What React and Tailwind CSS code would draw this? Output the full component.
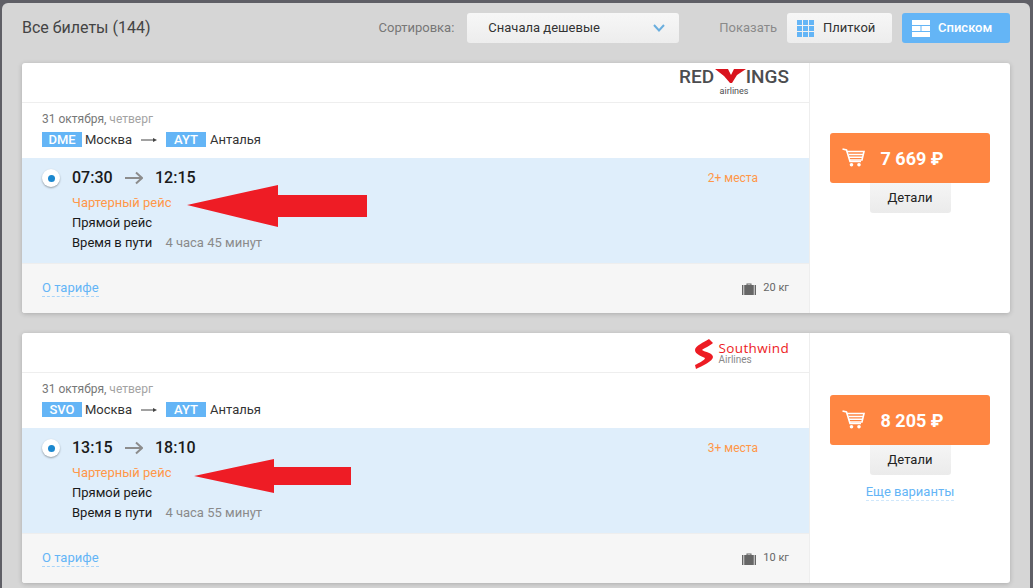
const Cart = () => (
  <svg width="23" height="19" viewBox="0 0 23 19" fill="none" className="absolute left-[12px] top-[15px]">
    <path d="M0.5 1 L4.5 2 L8 13.5 H19" stroke="white" strokeWidth="1.6" />
    <path d="M5 3.5 H22 L20 12 H7.5" stroke="white" strokeWidth="1.6" />
    <path d="M6.5 6.5 H21 M7 9.3 H20.5" stroke="white" strokeWidth="1.4" />
    <circle cx="9.5" cy="16.8" r="1.8" fill="white" />
    <circle cx="17" cy="16.8" r="1.8" fill="white" />
  </svg>
);

const Bag = () => (
  <svg width="14" height="12" viewBox="0 0 14 12" fill="#666">
    <path d="M4.5 2 V0.5 H9.5 V2 H8.5 V1.4 H5.5 V2 Z" />
    <rect x="0" y="2" width="1.4" height="10" />
    <rect x="2.2" y="2" width="9.6" height="10" />
    <rect x="12.6" y="2" width="1.4" height="10" />
  </svg>
);

const RedArrow = ({ className, width, height, points }) => (
  <svg width={width} height={height} className={className}>
    <polygon points={points} fill="#ee1c25" />
  </svg>
);

const RedwingsLogo = () => (
  <div className="flex flex-col items-center pt-[4px] pr-[20px] text-[#4c4d4f]">
    <div className="flex items-center h-[18px] text-[19px] font-medium leading-none font-['Roboto',sans-serif]">
      <span>RED</span>
      <svg width="33" height="14" viewBox="0 0 33 14" className="-ml-[0.5px] -mr-[1px]">
        <path d="M1 0 H14 L17 6 L20 0 H32 L23 6 L18 14 L16 14 L10 7 Z" fill="#d9141e" />
      </svg>
      <span>INGS</span>
    </div>
    <div className="text-[9px] leading-[10px] mt-[1px]">airlines</div>
  </div>
);

const SouthwindLogo = () => (
  <div className="flex items-center gap-[5px] pt-[3px] pr-[20px]">
    <svg width="19" height="30" viewBox="0 0 19 30">
      <path d="M14 0 L18 4 C15 7 9 9 7 11 C10 13 18 14 18 18 C18 22 7 27 1 30 L0 26 C4 24 10 21 10 19 C6 17 0 15 0 11 C0 7 9 3 14 0 Z" fill="#ed1c24" />
    </svg>
    <div className="flex flex-col -mt-[2px]">
      <span className="text-[13.5px] leading-[13px] font-medium tracking-[0.35px] text-[#ed1c24] font-['Open_Sans',sans-serif]">Southwind</span>
      <span className="text-[10px] leading-[10px] text-[#8a8a8a] w-[28px] font-['Roboto',sans-serif]">Airlines</span>
    </div>
  </div>
);

const Ticket = ({ logo, from, dep, arr, seats, duration, baggage, price, sidePad, more, arrow }) => (
  <div className="flex h-[250px] bg-white rounded-[3px] shadow-[0_1px_5px_rgba(0,0,0,0.2)] overflow-hidden">
    <div className="w-[787px] flex flex-col">
      <div className="h-[40px] flex justify-end border-b border-[#eeeeee]">{logo}</div>
      <div className="h-[55px] pl-[20px] pt-[9px]">
        <div className="text-[12px] leading-[15px] text-[#777777]">
          31 октября, <span className="text-[#a3a3a3]">четверг</span>
        </div>
        <div className="flex items-center mt-[5px] text-[13px] leading-[15px] text-[#333333]">
          <span className="w-[40px] text-center bg-[#64b5f6] text-white font-medium">{from}</span>
          <span className="ml-[3px] w-[47px]">Москва</span>
          <svg width="16" height="6" viewBox="0 0 16 6" className="ml-[9px]">
            <path d="M0 3 H13" stroke="#444" strokeWidth="1" />
            <path d="M12 1 L16 3 L12 5 Z" fill="#444" />
          </svg>
          <span className="ml-[9px] w-[40px] text-center bg-[#64b5f6] text-white font-medium">AYT</span>
          <span className="ml-[4px]">Анталья</span>
        </div>
      </div>
      <div className="relative h-[105px] bg-[#dfeefb] pl-[20px] pr-[51px] pt-[10px] flex">
        <div className="w-[18px] h-[18px] mt-[1px] rounded-full bg-white shadow-[0_1px_2px_rgba(0,0,0,0.35)] flex items-center justify-center">
          <div className="w-[7px] h-[7px] rounded-full bg-[#1c88cf]"></div>
        </div>
        <div className="ml-[12px] flex-1">
          <div className="flex items-center h-[20px] text-[16px] font-medium text-[#1a1a1a]">
            <span className="w-[40px]">{dep}</span>
            <svg width="18" height="14" viewBox="0 0 18 14" className="ml-[13px]" fill="none">
              <path d="M0 7 H17 M11 1.5 L17 7 L11 12.5" stroke="#8c8c8c" strokeWidth="2" />
            </svg>
            <span className="ml-[12px]">{arr}</span>
          </div>
          <div className="mt-[5px] text-[13px] leading-[20px] text-[#ff9748]">Чартерный рейс</div>
          <div className="text-[13px] leading-[20px] text-[#1a1a1a]">Прямой рейс</div>
          <div className="text-[13px] leading-[20px] text-[#1a1a1a]">
            Время в пути<span className="ml-[13px] text-[#8a8a8a]">{duration}</span>
          </div>
        </div>
        <div className="text-[12px] leading-[20px] text-[#ff9748]">{seats}</div>
        {arrow}
      </div>
      <div className="flex-1 bg-[#f6f6f6] border-t border-[#eeeeee] flex items-center justify-between pl-[20px] pr-[20px]">
        <span className="text-[13px] leading-[16px] text-[#64b5f6] border-b border-dashed border-[#a9d5f9]">О тарифе</span>
        <div className="flex items-center gap-[7px] text-[11px] text-[#666666]">
          <Bag />
          <span>{baggage}</span>
        </div>
      </div>
    </div>
    <div className={`flex-1 border-l border-[#eeeeee] flex flex-col items-center ${sidePad}`}>
      <div className="relative w-[160px] h-[50px] rounded-[3px] bg-[#ff8642] flex items-center justify-center pl-[4px] text-white text-[18px] font-bold">
        <Cart />
        {price}
      </div>
      <div className="w-[81px] h-[30px] rounded-b-[3px] bg-gradient-to-b from-[#f5f5f5] to-[#ebebeb] flex items-center justify-center text-[13px] text-[#222222]">
        Детали
      </div>
      {more && (
        <span className="mt-[9px] text-[13px] leading-[16px] text-[#64b5f6] border-b border-dashed border-[#cfe7fb]">Еще варианты</span>
      )}
    </div>
  </div>
);

export default function App() {
  return (
    <div className="h-[588px] overflow-hidden bg-[#5f5f66] pt-[3px] pl-[2px] pr-[3px] font-['Roboto',sans-serif]">
      <div className="h-[585px] bg-[#d6d6d6] rounded-t-[6px] pl-[20px] pr-[20px]">
        <div className="flex items-center h-[60px] pt-[0px] pb-[10px]">
          <h1 className="text-[16px] text-[#444444]">Все билеты (144)</h1>
          <span className="ml-auto text-[13px] text-[#777777]">Сортировка:</span>
          <div className="ml-[13px] w-[212px] h-[30px] rounded-[3px] bg-gradient-to-b from-[#f7f7f7] to-[#ededed] flex items-center justify-between pl-[21px] pr-[14px] text-[13px] text-[#333333]">
            Сначала дешевые
            <svg width="12" height="8" viewBox="0 0 12 8" fill="none">
              <path d="M1 1 L6 6.5 L11 1" stroke="#6aaede" strokeWidth="2" />
            </svg>
          </div>
          <span className="ml-[40px] text-[13px] text-[#8a8a8a]">Показать</span>
          <div className="ml-[10px] w-[105px] h-[30px] rounded-[3px] bg-gradient-to-b from-[#f7f7f7] to-[#ededed] flex items-center pl-[10px] text-[13px] text-[#333333]">
            <svg width="17" height="17" viewBox="0 0 17 17" fill="#64b5f6">
              <rect x="0" y="0" width="5" height="5" /><rect x="6" y="0" width="5" height="5" /><rect x="12" y="0" width="5" height="5" />
              <rect x="0" y="6" width="5" height="5" /><rect x="6" y="6" width="5" height="5" /><rect x="12" y="6" width="5" height="5" />
              <rect x="0" y="12" width="5" height="5" /><rect x="6" y="12" width="5" height="5" /><rect x="12" y="12" width="5" height="5" />
            </svg>
            <span className="ml-[9px]">Плиткой</span>
          </div>
          <div className="ml-[10px] w-[108px] h-[30px] rounded-[3px] bg-[#64b5f6] flex items-center pl-[10px] text-[13px] font-medium text-white">
            <svg width="18" height="17" viewBox="0 0 18 17" fill="white">
              <rect x="0" y="0" width="18" height="5" /><rect x="0" y="6" width="8.5" height="5" /><rect x="9.5" y="6" width="8.5" height="5" /><rect x="0" y="12" width="18" height="5" />
            </svg>
            <span className="ml-[8px]">Списком</span>
          </div>
        </div>
        <div className="flex flex-col gap-[20px]">
          <Ticket
            logo={<RedwingsLogo />}
            from="DME"
            dep="07:30"
            arr="12:15"
            seats="2+ места"
            duration="4 часа 45 минут"
            baggage="20 кг"
            price="7 669 ₽"
            sidePad="pt-[70px]"
            arrow={
              <RedArrow
                className="absolute left-[165px] top-[27px]"
                width={180}
                height={42}
                points="0,20 91,0 91,10 180,10 180,32 91,32 91,42"
              />
            }
          />
          <Ticket
            logo={<SouthwindLogo />}
            from="SVO"
            dep="13:15"
            arr="18:10"
            seats="3+ места"
            duration="4 часа 55 минут"
            baggage="10 кг"
            price="8 205 ₽"
            sidePad="pt-[62px]"
            more
            arrow={
              <RedArrow
                className="absolute left-[172px] top-[31px]"
                width={157}
                height={34}
                points="0,17 80,0 80,8 157,8 157,26 80,26 80,34"
              />
            }
          />
        </div>
      </div>
    </div>
  );
}
